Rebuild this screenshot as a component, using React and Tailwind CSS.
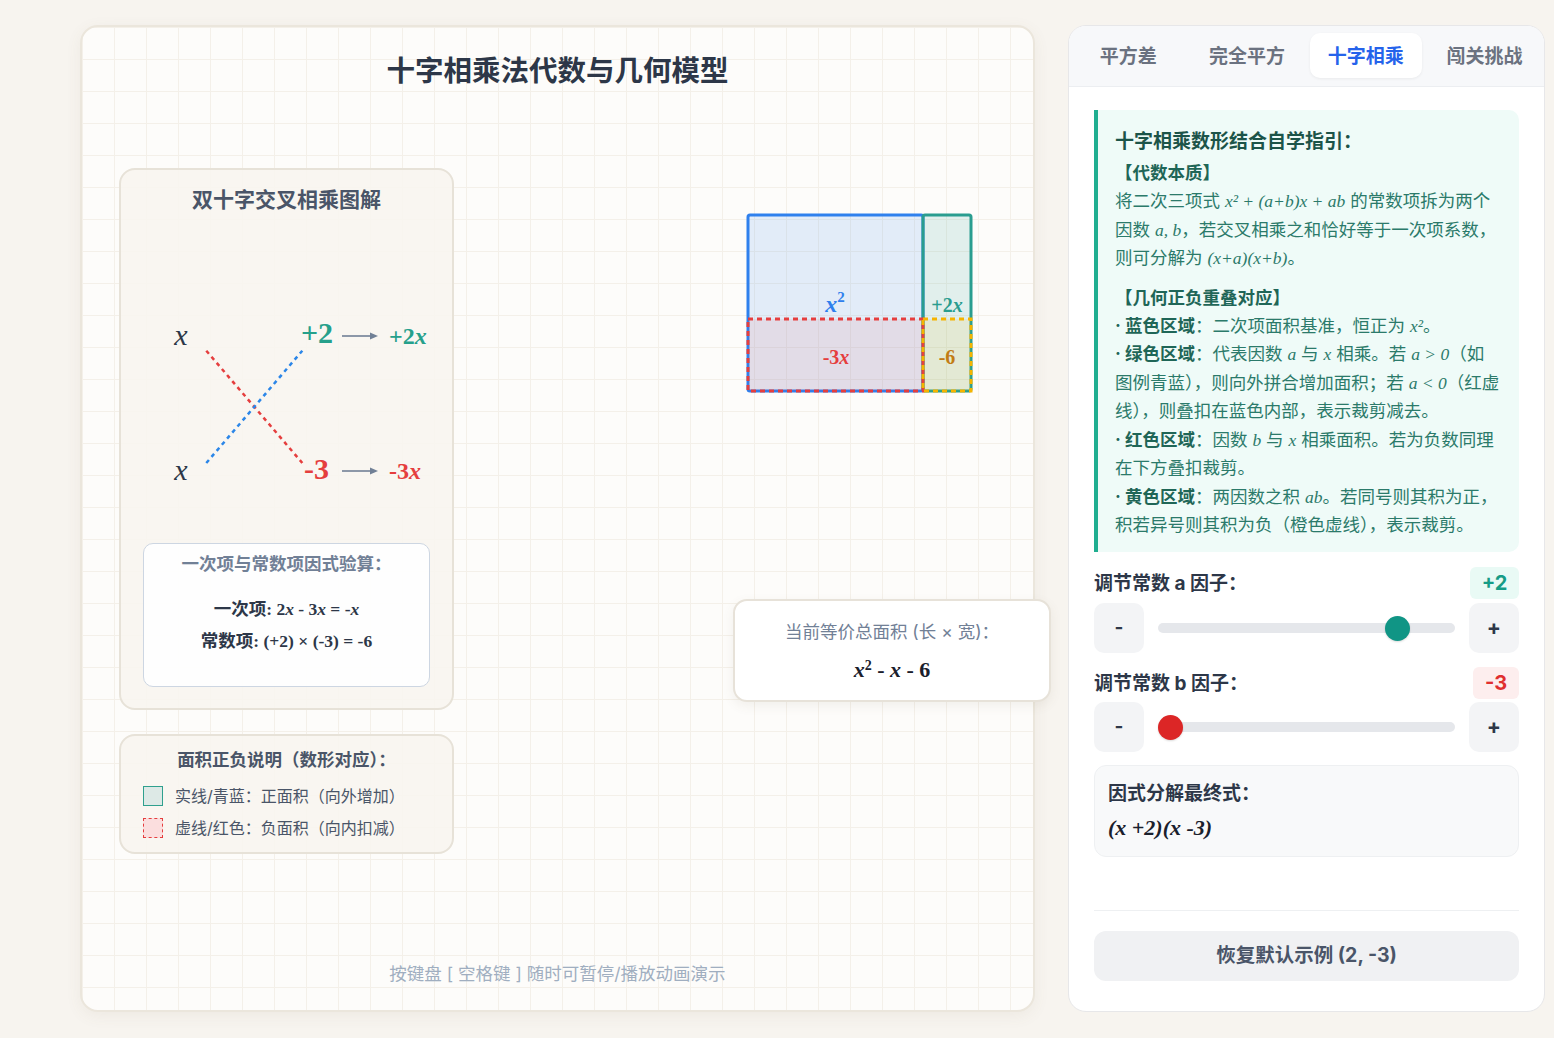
import React from "react";

function M({ children }) {
  return <span className="font-['Liberation_Serif','Times_New_Roman',serif] italic">{children}</span>;
}

function CrossDiagram() {
  const serif = "Liberation Serif, Times New Roman, serif";
  return (
    <svg width="287" height="329" viewBox="0 0 287 329" className="block">
      <line x1="63.3" y1="136.7" x2="159.3" y2="249" stroke="#e53e3e" strokeWidth="2.5" strokeDasharray="4 4" />
      <line x1="63.3" y1="249" x2="159.3" y2="136.7" stroke="#2b86e8" strokeWidth="2.5" strokeDasharray="4 4" />
      <text x="38" y="131" textAnchor="middle" fontFamily={serif} fontStyle="italic" fontSize="30" fill="#2d3748">x</text>
      <text x="38" y="266" textAnchor="middle" fontFamily={serif} fontStyle="italic" fontSize="30" fill="#2d3748">x</text>
      <text x="158" y="129" fontFamily={serif} fontWeight="bold" fontSize="30" fill="#26a08b">+2</text>
      <text x="161" y="265" fontFamily={serif} fontWeight="bold" fontSize="30" fill="#e53e3e">-3</text>
      <line x1="199" y1="122" x2="228" y2="122" stroke="#718096" strokeWidth="1.6" />
      <path d="M227 118.5 L235 122 L227 125.5 Z" fill="#718096" />
      <line x1="199" y1="257" x2="228" y2="257" stroke="#718096" strokeWidth="1.6" />
      <path d="M227 253.5 L235 257 L227 260.5 Z" fill="#718096" />
      <text x="246" y="130" fontFamily={serif} fontWeight="bold" fontSize="24" fill="#26a08b">
        +2<tspan fontStyle="italic">x</tspan>
      </text>
      <text x="246" y="265" fontFamily={serif} fontWeight="bold" fontSize="24" fill="#e53e3e">
        -3<tspan fontStyle="italic">x</tspan>
      </text>
    </svg>
  );
}

function Geometry() {
  const serif = "Liberation Serif, Times New Roman, serif";
  return (
    <svg width="330" height="230" viewBox="0 0 330 230" className="block">
      <rect x="8" y="10" width="175" height="176" rx="2" fill="rgba(47,128,237,0.13)" stroke="#2f80ed" strokeWidth="3" />
      <rect x="183" y="10" width="48" height="176" rx="2" fill="rgba(42,157,143,0.13)" stroke="#2a9d8f" strokeWidth="3" />
      <rect x="8" y="114" width="175" height="72" fill="rgba(229,62,62,0.09)" stroke="#e53e3e" strokeWidth="3" strokeDasharray="5 4" />
      <rect x="183" y="114" width="48" height="72" fill="rgba(246,190,0,0.10)" stroke="#f6b400" strokeWidth="3" strokeDasharray="5 4" />
      <text x="95" y="107" textAnchor="middle" fontFamily={serif} fontWeight="bold" fontStyle="italic" fontSize="24" fill="#2f80ed">
        x<tspan fontSize="15" dy="-10" fontStyle="normal">2</tspan>
      </text>
      <text x="207" y="107" textAnchor="middle" fontFamily={serif} fontWeight="bold" fontSize="20" fill="#2a9d8f">
        +2<tspan fontStyle="italic">x</tspan>
      </text>
      <text x="96" y="159" textAnchor="middle" fontFamily={serif} fontWeight="bold" fontSize="20" fill="#e53e3e">
        -3<tspan fontStyle="italic">x</tspan>
      </text>
      <text x="207" y="159" textAnchor="middle" fontFamily={serif} fontWeight="bold" fontSize="20" fill="#c27c14">-6</text>
    </svg>
  );
}

function SliderRow({ value, color }) {
  const frac = (value + 3) / 6;
  return (
    <div className="flex h-[50px] items-center gap-[14px]">
      <button className="flex h-[50px] w-[50px] items-center justify-center rounded-[10px] bg-[#f3f4f6] text-[19px] font-bold text-[#2d3748]">-</button>
      <div className="relative h-[10px] flex-1 rounded-full bg-[#e5e7eb]">
        <div
          className="absolute top-[-7.5px] h-[25px] w-[25px] rounded-full shadow-[0_1px_2px_rgba(0,0,0,0.15)]"
          style={{ left: `calc((100% - 25px) * ${frac})`, background: color }}
        />
      </div>
      <button className="flex h-[50px] w-[50px] items-center justify-center rounded-[10px] bg-[#f3f4f6] text-[21px] font-bold text-[#2d3748]">+</button>
    </div>
  );
}

export default function App() {
  const tabs = ["平方差", "完全平方", "十字相乘", "闯关挑战"];
  return (
    <div className="flex min-h-[1038px] w-full gap-[33px] bg-[#f7f4ef] pl-[80px] pt-[25px] font-['Inter','Noto_Sans_CJK_SC',sans-serif]">
      {/* Left canvas card */}
      <div className="relative flex h-[987px] w-[955px] shrink-0 flex-col rounded-[18px] border-2 border-[#ebe6dc] bg-[#fdfcfa] bg-[linear-gradient(to_right,#f4f0e9_1px,transparent_1px),linear-gradient(to_bottom,#f4f0e9_1px,transparent_1px)] bg-size-[32px_32px] shadow-[0_4px_16px_rgba(120,100,70,0.07)]">
        <h1 className="pt-[26px] text-center text-[28.5px] font-bold leading-[36px] text-[#2d3748]">十字相乘法代数与几何模型</h1>

        <div className="ml-[37px] mt-[79px] flex w-[335px] flex-col gap-[24px]">
          <div className="flex h-[542px] flex-col rounded-[16px] border-2 border-[#e7e2d8] bg-[#f8f5f0]/90 px-[22px] pb-[21px] pt-[16px]">
            <div className="text-center text-[21px] font-bold leading-[28px] text-[#4a5568]">双十字交叉相乘图解</div>
            <CrossDiagram />
            <div className="flex h-[144px] flex-col items-center rounded-[10px] border-[1.5px] border-[#cdd6e2] bg-white/90">
              <div className="mt-[8px] text-[17.5px] font-bold leading-[24px] text-[#718096]">一次项与常数项因式验算：</div>
              <div className="mt-[17px] font-['Liberation_Serif','Noto_Sans_CJK_SC',serif] text-[17.5px] font-bold leading-[32px] text-[#2d3748]">
                一次项: 2<i>x</i> - 3<i>x</i> = -<i>x</i>
              </div>
              <div className="font-['Liberation_Serif','Noto_Sans_CJK_SC',serif] text-[17.5px] font-bold leading-[32px] text-[#2d3748]">
                常数项: (+2) × (-3) = -6
              </div>
            </div>
          </div>

          <div className="flex h-[120px] flex-col rounded-[16px] border-2 border-[#e7e2d8] bg-[#f8f5f0]/90 px-[22px] pt-[12px]">
            <div className="text-center text-[17.5px] font-bold leading-[24px] text-[#4a5568]">面积正负说明（数形对应）：</div>
            <div className="mt-[12px] flex h-[24px] items-center gap-[12px]">
              <div className="h-[20px] w-[20px] border-[1.5px] border-[#2fa08e] bg-[#dde9e6]" />
              <span className="text-[16px] text-[#4a5568]">实线/青蓝：正面积（向外增加）</span>
            </div>
            <div className="mt-[8px] flex h-[24px] items-center gap-[12px]">
              <div className="h-[20px] w-[20px] border-[1.5px] border-dashed border-[#e53e3e] bg-[#fbdede]" />
              <span className="text-[16px] text-[#4a5568]">虚线/红色：负面积（向内扣减）</span>
            </div>
          </div>
        </div>

        <div className="absolute left-[658px] top-[178px]">
          <Geometry />
        </div>

        <div className="absolute left-[651px] top-[572px] flex h-[103px] w-[318px] flex-col items-center rounded-[14px] border-2 border-[#e7e2d9] bg-white shadow-[0_4px_12px_rgba(100,90,70,0.08)]">
          <div className="mt-[20px] text-[17.5px] leading-[22px] text-[#718096]">当前等价总面积 (长 × 宽)：</div>
          <div className="mt-[12px] font-['Liberation_Serif',serif] text-[22px] font-bold leading-[30px] text-[#1a202c]">
            <i>x</i><sup className="text-[14px]">2</sup> - <i>x</i> - 6
          </div>
        </div>

        <div className="mt-auto pb-[25px] text-center text-[17.5px] leading-[22px] text-[#a0aec0]">按键盘 [ 空格键 ] 随时可暂停/播放动画演示</div>
      </div>

      {/* Right panel */}
      <div className="flex h-[987px] w-[477px] shrink-0 flex-col overflow-hidden rounded-[18px] border-[1.5px] border-[#e7e7e9] bg-white">
        <div className="flex gap-[6px] border-b border-[#eceef1] bg-[#f7f8fa] px-[3px] pb-[8px] pt-[7px]">
          {tabs.map((t) => (
            <div
              key={t}
              className={
                t === "十字相乘"
                  ? "flex h-[45px] flex-1 items-center justify-center rounded-[10px] bg-white pt-[3px] text-[19px] font-semibold text-[#2563eb] shadow-[0_1px_3px_rgba(0,0,0,0.06)]"
                  : "flex h-[45px] flex-1 items-center justify-center pt-[3px] text-[19px] font-semibold text-[#6b7280]"
              }
            >
              {t}
            </div>
          ))}
        </div>

        <div className="flex flex-1 flex-col px-[25px] pb-[30px] pt-[23px]">
          <div className="h-[442px] rounded-r-[10px] border-l-4 border-[#20ae90] bg-[#effbf8] pl-[17px] pr-[8px] pt-[18px] text-[17.5px] text-[#2b7a6a]">
            <div className="text-[19px] font-bold leading-[28px] text-[#1c5449]">十字相乘数形结合自学指引：</div>
            <div className="mt-[3px] font-bold leading-[28px] text-[#1f6657]">【代数本质】</div>
            <div className="whitespace-nowrap leading-[28.5px]">
              <div>将二次三项式 <M>x² + (a+b)x + ab</M> 的常数项拆为两个</div>
              <div>因数 <M>a, b</M>，若交叉相乘之和恰好等于一次项系数，</div>
              <div>则可分解为 <M>(x+a)(x+b)</M>。</div>
            </div>
            <div className="mt-[11px] font-bold leading-[28px] text-[#1f6657]">【几何正负重叠对应】</div>
            <div className="whitespace-nowrap leading-[28.5px]">
              <div><b className="text-[#1f6657]">· 蓝色区域</b>：二次项面积基准，恒正为 <M>x²</M>。</div>
              <div><b className="text-[#1f6657]">· 绿色区域</b>：代表因数 <M>a</M> 与 <M>x</M> 相乘。若 <M>a &gt; 0</M>（如</div>
              <div>图例青蓝），则向外拼合增加面积；若 <M>a &lt; 0</M>（红虚</div>
              <div>线），则叠扣在蓝色内部，表示裁剪减去。</div>
              <div><b className="text-[#1f6657]">· 红色区域</b>：因数 <M>b</M> 与 <M>x</M> 相乘面积。若为负数同理</div>
              <div>在下方叠扣裁剪。</div>
              <div><b className="text-[#1f6657]">· 黄色区域</b>：两因数之积 <M>ab</M>。若同号则其积为正，</div>
              <div>积若异号则其积为负（橙色虚线），表示裁剪。</div>
            </div>
          </div>

          <div className="mt-[15px] flex h-[32px] items-center justify-between">
            <span className="pt-[3px] text-[19px] font-bold text-[#2d3748]">调节常数 a 因子：</span>
            <span className="flex h-[32px] w-[49px] items-center justify-center rounded-[6px] bg-[#e9faf5] text-[20px] font-bold text-[#179c86]">+2</span>
          </div>
          <div className="mt-[4px]">
            <SliderRow value={2} color="#109585" />
          </div>

          <div className="mt-[14px] flex h-[32px] items-center justify-between">
            <span className="pt-[3px] text-[19px] font-bold text-[#2d3748]">调节常数 b 因子：</span>
            <span className="flex h-[32px] w-[46px] items-center justify-center rounded-[6px] bg-[#fdeeee] text-[20px] font-bold text-[#e02f2f]">-3</span>
          </div>
          <div className="mt-[3px]">
            <SliderRow value={-3} color="#dc2626" />
          </div>

          <div className="mt-[13px] flex h-[92px] flex-col rounded-[12px] border border-[#eef0f2] bg-[#f8f9fa] px-[13px] pt-[16px]">
            <div className="text-[19px] font-bold leading-[24px] text-[#2d3748]">因式分解最终式：</div>
            <div className="mt-[8px] font-['Liberation_Serif',serif] text-[22px] font-bold italic leading-[28px] text-[#1a202c]">(x +2)(x -3)</div>
          </div>

          <div className="mt-auto border-t border-[#eef0f2] pt-[20px]">
            <button className="flex h-[50px] w-full items-center justify-center rounded-[12px] bg-[#f0f1f3] text-[19.5px] font-bold text-[#4a5568]">
              恢复默认示例 (2, -3)
            </button>
          </div>
        </div>
      </div>
    </div>
  );
}
